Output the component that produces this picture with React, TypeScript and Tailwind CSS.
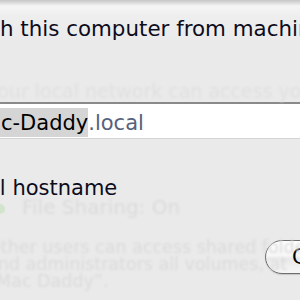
const ghost = 'text-[#dbdbdb] blur-[0.8px]'

function StatusDot() {
  return <span className="ml-[-5px] mr-[17px] mt-[4px] h-[10px] w-[10px] shrink-0 rounded-full bg-[#d2e4cc] blur-[0.5px]" />
}

export default function App() {
  return (
    <div className="h-[300px] w-[300px] overflow-hidden bg-[#eaeaea] font-['DejaVu_Sans',sans-serif] text-black">
      {/* sheet title */}
      <div className="h-[40px] whitespace-nowrap bg-[linear-gradient(to_bottom,#c6c6c6_0px,#f5f5f5_6px,#eeeeee_16px,#ebebeb_40px)] pt-[17px] text-[21.4px] leading-[24px] text-[#0c0c1c]">
        h this computer from machines on
      </div>

      {/* faded window text behind the sheet */}
      <div className="h-[62px] whitespace-nowrap pt-[41px] text-[19px] leading-[20px] text-[#e0e0e0] blur-[1px]">
        <span className="ml-[-14px]">your local network can access your computer</span>
      </div>

      {/* hostname field */}
      <div className="h-[37px] border-t-2 border-b border-t-[#8a8a8a] border-b-[#d4d4d4] bg-white pt-[4px] whitespace-nowrap text-[21px]">
        <span className="ml-[-30px] inline-block h-[29px] bg-[#d5d5d5] pt-[2px] leading-[27px] text-black">
          <span className="text-transparent">Ma</span>c-Daddy
        </span>
        <span className="leading-[27px] text-[#56627c]">.local</span>
      </div>

      {/* checkbox label */}
      <div className="whitespace-nowrap pt-[37px] text-[21px] leading-[24px] text-[#0c0c1c]">
        <span className="ml-[-13px]">al hostname</span>
      </div>

      {/* status */}
      <div className="flex h-[24px] items-start whitespace-nowrap">
        <StatusDot />
        <span className={`text-[20px] leading-[14px] ${ghost}`}>File Sharing: On</span>
      </div>

      {/* description + button */}
      <div className="flex items-start pt-[15px]">
        <p className={`ml-[-13px] w-[278px] shrink-0 whitespace-nowrap text-[17.5px] leading-[17px] ${ghost}`}>
          Other users can access shared folders
          <br />
          and administrators all volumes, at
          <br />
          “Mac Daddy”.
        </p>
        <button
          type="button"
          className="mt-[1px] h-[34px] w-[90px] shrink-0 rounded-full border border-[#6e6e6e] bg-[linear-gradient(to_bottom,#ffffff_0%,#f7f7f7_45%,#e9e9e9_55%,#f6f6f6_100%)] pl-[26px] text-left text-[21px] leading-[32px] text-black shadow-[0_1px_1px_rgba(0,0,0,0.15)]"
        >
          Cancel
        </button>
      </div>
    </div>
  )
}
